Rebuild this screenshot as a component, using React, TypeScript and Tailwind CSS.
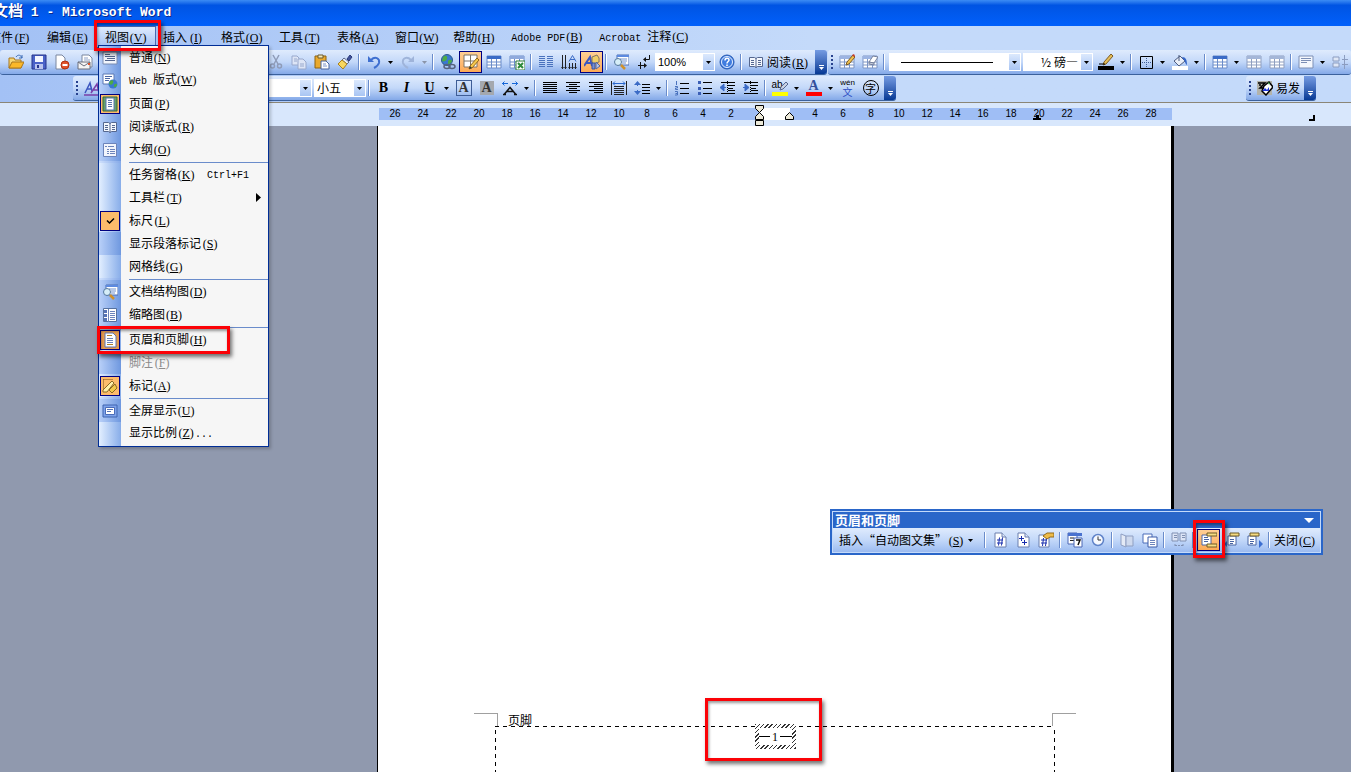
import { ReactNode } from "react";
import { clsx } from "clsx";

// ── Icons, all on a 16x16 grid ─────────────────────────────────────────────
const sheet = (
  <>
    <path d="M3 1h7l4 4v10H3z" fill="#fff" stroke="#6a7fae" />
    <path d="M10 1v4h4" fill="#dce6f8" stroke="#6a7fae" />
  </>
);

const grid = (stroke: string, head: string) => (
  <>
    <path d="M1 2h14v12H1z" fill="#fff" stroke={stroke} />
    <path d="M1 2h14v3H1z" fill={head} />
    <path d="M1 8h14M1 11h14M5.500 5v9M10.500 5v9" stroke={stroke} />
  </>
);

const lines = (rows: [number, number][]) => (
  <>
    {rows.map(([x, w], i) => (
      <path key={i} d={`M${x} ${2.5 + i * 2}h${w}`} stroke="#000" />
    ))}
  </>
);

const ICONS: Record<string, ReactNode> = {
  open: (
    <>
      <path d="M1 4h5l1 2h6v8H1z" fill="#f7d774" stroke="#a9761c" />
      <path d="M4 8h12l-3 6H1z" fill="#fbb829" stroke="#a9761c" />
      <path d="M8 3c2-3 5-2 6 1M14 1v3h-3" fill="none" stroke="#3b6bb5" />
    </>
  ),
  save: (
    <>
      <path d="M1 1h14v14H1z" fill="#4a62c8" stroke="#26358c" />
      <path d="M4 2h8v6H4z" fill="#f3f6ff" />
      <path d="M4 10h8v5H4z" fill="#b9c4ee" />
      <path d="M6 11h2v3H6z" fill="#26358c" />
    </>
  ),
  permission: (
    <>
      <path d="M2 1h6l3 3v11H2z" fill="#fff" stroke="#7b879f" />
      <circle cx="11" cy="11" r="4" fill="#e2532c" stroke="#b0310f" />
      <path d="M8.500 10h5v2h-5z" fill="#fff" />
    </>
  ),
  mail: (
    <>
      <path d="M5 1h7l3 3v9H5z" fill="#fff" stroke="#7b879f" />
      <path d="M7 4h4M7 6h6" stroke="#8fa2c8" />
      <path d="M1 8h12v7H1z" fill="#f5f5f5" stroke="#6b6f7c" />
      <path d="M1 8l6 4 6-4" fill="none" stroke="#6b6f7c" />
      <path d="M11 9h2v2h-2z" fill="#e2532c" />
    </>
  ),
  cut: (
    <g fill="none" stroke="#8f9cb8">
      <path d="M5 1l5 9M11 1L6 10" strokeWidth="1.500" />
      <circle cx="4.500" cy="12" r="2" strokeWidth="1.500" />
      <circle cx="11.500" cy="12" r="2" strokeWidth="1.500" />
    </g>
  ),
  copy: (
    <g fill="#dde5f6" stroke="#98a8cc">
      <path d="M1 2h5l2 2v7H1z" />
      <path d="M7 5h5l3 3v7H7z" />
      <path d="M3 5h3M3 7h3M9 10h4M9 12h4" />
    </g>
  ),
  paste: (
    <>
      <path d="M1 2h11v12H1z" fill="#e9a92d" stroke="#8d6211" />
      <path d="M4 1h5v3H4z" fill="#f6e8b5" stroke="#6b5a2e" />
      <path d="M7 7h5l3 3v5H7z" fill="#fff" stroke="#49659f" />
      <path d="M9 10h3M9 12h4" stroke="#7b93c9" />
    </>
  ),
  painter: (
    <>
      <path d="M10 5l3-4 2 2-3 4z" fill="#41539b" stroke="#2b3a7b" />
      <path d="M7 4l5 4-2 2-5-4z" fill="#e8edf7" stroke="#5d6b8e" />
      <path d="M5 6l5 4-4 5-5-5z" fill="#f8d75e" stroke="#a9801c" />
    </>
  ),
  undo: (
    <>
      <path d="M2 2v6h6z" fill="#3e6fd0" />
      <path d="M5 6c4-4 9-2 8 3-1 3-3 4-5 5" fill="none" stroke="#3e6fd0" strokeWidth="2" />
    </>
  ),
  redo: (
    <>
      <path d="M14 2v6H8z" fill="#9fb4da" />
      <path d="M11 6c-4-4-9-2-8 3 1 3 3 4 5 5" fill="none" stroke="#9fb4da" strokeWidth="2" />
    </>
  ),
  link: (
    <>
      <circle cx="7" cy="6" r="5.500" fill="#3a78cf" stroke="#2c5a8c" />
      <path d="M3 3c3-3 5 0 4 2S4 8 2 7zM8 7c2-2 4-1 4 0s-3 4-4 3z" fill="#4dab45" />
      <g fill="none" stroke="#56627c" strokeWidth="1.500">
        <ellipse cx="7" cy="12.500" rx="3" ry="2" />
        <ellipse cx="12" cy="12.500" rx="3" ry="2" />
      </g>
    </>
  ),
  tableBorder: (
    <>
      <path d="M1 1h13v12H1z" fill="#fff" stroke="#7f7466" />
      <path d="M1 7h13M7.500 1v12" stroke="#7f7466" />
      <path d="M6 15l1-3 7-8 2 2-7 8z" fill="#f6c94d" stroke="#93661a" />
      <path d="M6 15l1-3 2 2z" fill="#333" />
    </>
  ),
  table: grid("#6b8cc9", "#3b6bc6"),
  tableGrey: grid("#8f9fc0", "#a4b6d8"),
  excel: (
    <>
      {grid("#6b8cc9", "#8fa9dc")}
      <path d="M7 7h9v9H7z" fill="#fff" stroke="#2d7d37" />
      <path d="M9 9l5 5M14 9l-5 5" stroke="#2d8a3a" strokeWidth="2" />
    </>
  ),
  columns: (
    <path
      d="M1 2.500h6M1 4.500h6M1 6.500h6M1 8.500h6M1 10.500h6M1 12.500h6M9 2.500h6M9 4.500h6M9 6.500h6M9 8.500h6M9 10.500h6M9 12.500h6"
      stroke="#4a72bd"
    />
  ),
  textDir: (
    <>
      <path d="M1.500 1v14M4.500 1v14M8.500 9v6M11.500 9v6M14.500 9v6" stroke="#222" />
      <path d="M0 13h3l-1.500 2zM3 13h3l-1.500 2zM7 13h3l-1.500 2zM10 13h3l-1.500 2zM13 13h3l-1.500 2z" fill="#222" />
      <path d="M8 7.500l3.500-6 3.500 6M9 5.500h5" fill="none" stroke="#3b6bc6" />
    </>
  ),
  drawing: (
    <>
      <path d="M0 12L6 3l2 9M2 9h5" fill="none" stroke="#3d57c0" strokeWidth="2" />
      <path d="M8 3l5-2 2 3v4l-5 2-2-2z" fill="#f0cf67" stroke="#7f7466" />
      <path d="M8 9h3v6H8z" fill="#7590d4" stroke="#3b539e" />
      <path d="M12 8l4 4-4 3z" fill="#b7c5e9" stroke="#54699f" />
    </>
  ),
  docMap: (
    <>
      <path d="M4 1h12v10H4z" fill="#fff" stroke="#4b6fb5" />
      <path d="M4 1h12v2H4z" fill="#5d8ae0" />
      <path d="M7 5h7M9 7h5M9 9h4" stroke="#7393cf" />
      <circle cx="5" cy="8" r="3.500" fill="#d6eef8" stroke="#56799d" />
      <path d="M8 11l4 4" stroke="#d0912a" strokeWidth="2.500" />
    </>
  ),
  marks: (
    <>
      <path d="M13.500 1v4.500H8M4.500 8v7M2 11.500h6" fill="none" stroke="#111" />
      <path d="M10 3v5L7 5.500zM8 9v5l3-2.500z" fill="#111" />
    </>
  ),
  help: (
    <>
      <circle cx="8" cy="8" r="7" fill="#3f7ce0" stroke="#285bb4" />
      <circle cx="8" cy="8" r="5.500" fill="none" stroke="#e4eeff" />
      <path d="M6 6.500c0-3 4-3 4-.5 0 1.500-2 1.500-2 3.500M8 10.500v1.500" fill="none" stroke="#fff" strokeWidth="1.500" />
    </>
  ),
  book: (
    <>
      <path d="M1.500 3.500h5l1.500 1 1.500-1h5v9h-5l-1.500 1-1.500-1h-5z" fill="#f4f7fd" stroke="#55678f" />
      <path d="M8 4v10M3 6.500h3M3 8.500h3M3 10.500h3M10 6.500h3M10 8.500h3M10 10.500h3" stroke="#55678f" />
    </>
  ),
  drawTable: (
    <>
      {grid("#7d95c4", "#9db4e2")}
      <path d="M7 11l1-3 6-7 2 2-6 7z" fill="#f0c14d" stroke="#7a5a22" />
      <path d="M13 1l2 2 1-1-1-2z" fill="#c83a2c" />
    </>
  ),
  eraser: (
    <>
      {grid("#7d95c4", "#9db4e2")}
      <path d="M7 8l4-6 5 1-4 6z" fill="#fff" stroke="#75809c" />
      <path d="M7 8l5 1v2l-5-1z" fill="#c6cede" stroke="#75809c" />
    </>
  ),
  pen: (
    <>
      <path d="M0 12h16v4H0z" fill="#000" />
      <path d="M5 11l1-3 7-8 2 2-7 8z" fill="#e6bd57" stroke="#7a5a22" />
      <path d="M1 10h6" stroke="#000" />
    </>
  ),
  borders: (
    <>
      <path d="M2.500 2.500h12v12h-12z" fill="none" stroke="#000" />
      <path d="M8.500 4v10M4 8.500h10" stroke="#3e5d96" strokeDasharray="1 1" />
    </>
  ),
  fill: (
    <>
      <path d="M0 12h16v4H0z" fill="#fff" />
      <path d="M2 7l6-5 5 5-6 5z" fill="#e9eef8" stroke="#4d5c80" />
      <path d="M7 1v6" stroke="#4d5c80" />
      <path d="M10 3c4 0 5 3 5 8-2-1-2-5-4-6z" fill="#3566c8" />
    </>
  ),
  vAlign: (
    <>
      <path d="M1 2h14v12H1z" fill="#f4f7fd" stroke="#7d8fb5" />
      <path d="M3 4.500h10M3 6.500h10M3 8.500h6" stroke="#7d8fb5" />
    </>
  ),
  distribute: (
    <path d="M1 3h6v4H1zM1 9h6v4H1zM10 5.500h6M10 10.500h6M12.500 1v14" fill="#dfe7f6" stroke="#8c9dc0" />
  ),
  styles: (
    <>
      <path d="M1 13L6 3l2 8M3 9h4" fill="none" stroke="#3d57c0" strokeWidth="1.500" />
      <path d="M7 13l6-9 2 9M9 10h5M0 15h16" fill="none" stroke="#7a3fa8" strokeWidth="1.500" />
    </>
  ),
  scale: (
    <>
      <path d="M1 14.500h3M12 14.500h3M2.500 14L8 7.500l5.500 6.500M5 11.500h6" fill="none" stroke="#111" strokeWidth="1.500" />
      <path d="M0 3.500h6M2.500 1.500l-2 2 2 2M10 3.500h6M13.500 1.500l2 2-2 2" fill="none" stroke="#1667d8" />
    </>
  ),
  justify: lines([[1, 14], [1, 14], [1, 14], [1, 14], [1, 14], [1, 14]]),
  center: lines([[1, 14], [4, 8], [1, 14], [4, 8], [1, 14], [4, 8]]),
  right: lines([[1, 14], [6, 9], [1, 14], [6, 9], [1, 14], [6, 9]]),
  spread: (
    <>
      <path d="M.5 1v14M15.500 1v14M3 6.500h10M3 8.500h10M3 10.500h10M3 12.500h10M3 14.500h10" stroke="#222" />
      <path d="M2 3.500h12M4 1.500l-2 2 2 2M12 1.500l2 2-2 2" fill="none" stroke="#2a67cc" />
    </>
  ),
  spacing: (
    <>
      <path d="M3.500 2v4M3.500 10v4" stroke="#3b6bc6" />
      <path d="M0 5l3.500-4L7 5zM0 11l3.500 4L7 11z" fill="#3b6bc6" />
      <path d="M8 4.500h8M8 7.500h8M8 10.500h8M8 13.500h8" stroke="#000" />
    </>
  ),
  numbered: (
    <>
      <path d="M6 3.500h9M6 8.500h9M6 13.500h9" stroke="#000" />
      <path d="M2.500 1v4M1 6.500h2.500v1.500H1.500v1.500H4M1 11.500h2.500v3.500H1M1.500 13.500h2" fill="none" stroke="#4a72bd" />
    </>
  ),
  bullets: (
    <>
      <path d="M6 2.500h9M6 8.500h9M6 13.500h9" stroke="#000" />
      <path d="M1 1h3v3H1zM1 7h3v3H1zM1 12h3v3H1z" fill="#3b5fb6" />
    </>
  ),
  outdent: (
    <>
      <path d="M1 2.500h14M8 5.500h7M8 8.500h5M8 10.500h7M1 13.500h14" stroke="#000" />
      <path d="M7.500 1v14" stroke="#000" strokeDasharray="1 1" />
      <path d="M6 7.500H1M4 4L0 7.500 4 11z" fill="#3b6bc6" stroke="#3b6bc6" />
    </>
  ),
  indent: (
    <>
      <path d="M1 2.500h14M8 5.500h7M8 8.500h5M8 10.500h7M1 13.500h14" stroke="#000" />
      <path d="M7.500 1v14" stroke="#000" strokeDasharray="1 1" />
      <path d="M0 7.500h5M2 4l4 3.500L2 11z" fill="#3b6bc6" stroke="#3b6bc6" />
    </>
  ),
  autotext: (
    <>
      <path d="M0 1h15v14H0z" fill="#b3b3ab" />
      <path d="M7 6l5-4 4 5-7 8-4-4z" fill="#fff" stroke="#000" strokeWidth="1.500" />
      <path d="M1 3h7L3 8h4M2 5h2" fill="none" stroke="#000" strokeWidth="1.500" />
      <path d="M5 11l3-3 2 2 2-3v4z" fill="#1b33d8" />
      <path d="M11 2l2 1-1 2z" fill="#2e9b3a" />
    </>
  ),
  normal: (
    <>
      <path d="M1 2h14v12H1z" fill="#f2f5fc" stroke="#7b8cb2" />
      <path d="M3 4.500h5M3 6.500h10M5 8.500h8M3 10.500h10" stroke="#55678f" />
    </>
  ),
  web: (
    <>
      <path d="M1 1h11v10H1z" fill="#fff" stroke="#5a78b5" />
      <path d="M3 3.500h7M3 5.500h5M3 7.500h4" stroke="#4a66a5" />
      <circle cx="11" cy="11" r="4.500" fill="#3a78cf" />
      <path d="M8 8c3-2 4 0 3 2s-2 2-4 1zM12 12c2-2 3-1 3 0s-2 3-3 2z" fill="#4dab45" />
    </>
  ),
  page: (
    <>
      <path d="M1 1h14v14H1z" fill="#67a06a" stroke="#35683c" />
      <path d="M4 2h8v12H4z" fill="#fff" stroke="#5d76b0" />
      <path d="M6 4.500h4M6 6.500h4M6 8.500h4M6 10.500h4" stroke="#5d76b0" />
    </>
  ),
  outline: (
    <>
      <path d="M1.500 1.500h13v13h-13z" fill="#f2f5fc" stroke="#6c84bb" />
      <path d="M3 4.500h2M6 4.500h6M5 7.500h2M8 7.500h5M5 9.500h2M8 9.500h5M5 11.500h2M8 11.500h5" stroke="#6c84bb" />
    </>
  ),
  check: <path d="M5 7.500l2.500 2.500L12 5.500" fill="none" stroke="#000" strokeWidth="1.500" />,
  thumbs: (
    <>
      <path d="M1.500 1.500h13v13h-13z" fill="#fff" stroke="#55719f" />
      <path d="M6.500 2v13M8 4.500h5M8 6.500h5M8 8.500h5M8 10.500h5M8 12.500h5" stroke="#6c84bb" />
      <path d="M2 3h3v3H2zM2 7h3v3H2zM2 11h3v3H2z" fill="#5673b5" />
    </>
  ),
  header: (
    <>
      <path d="M3 1h8l3 3v11H3z" fill="#fff" stroke="#5d76b0" />
      <path d="M5 3h5v1H5zM5 12h6v1H5z" fill="#b28326" />
      <path d="M5 6.500h6M5 8.500h6M5 10.500h6" stroke="#6c84bb" />
    </>
  ),
  markup: (
    <>
      <path d="M1.500 1.500h9M1.500 1.500v12" stroke="#7a4f14" strokeDasharray="1 1" />
      <path d="M1 12l9-9 2 2-7 9H1z" fill="#fff0a8" stroke="#8b6b24" />
      <path d="M7 12l6-6 2 4-5 5z" fill="#f2c94b" stroke="#8b6b24" />
    </>
  ),
  fullscreen: (
    <>
      <path d="M1 2h14v12H1z" fill="#7ea3ea" stroke="#3f64b0" />
      <path d="M3.500 4.500h9v7h-9z" fill="#fff" stroke="#4a6cb8" />
      <path d="M5 6.500h6M5 8.500h4" stroke="#5673b5" />
    </>
  ),
  pageNum: (
    <>
      {sheet}
      <path d="M5 8h6M5 11h6M7.500 5.500l-1 8M10.500 5.500l-1 8" stroke="#1a2fae" />
    </>
  ),
  pageTotal: (
    <>
      {sheet}
      <path d="M4 6.500h5M6.500 4v5M7 10.500h5M9.500 8v5" stroke="#1a2fae" />
    </>
  ),
  pageFmt: (
    <>
      <path d="M1 3h10v12H1z" fill="#fff" stroke="#6a7fae" />
      <path d="M3 8h6M3 11h6M5.500 6l-1 8M8.500 6l-1 8" stroke="#1a2fae" />
      <path d="M5 4l4-3h7v4h-4l-3 2z" fill="#eebc4a" stroke="#946a18" />
    </>
  ),
  date: (
    <>
      <path d="M1 1h9v11H1z" fill="#fff" stroke="#4a66b5" />
      <path d="M1 1h14v3H1z" fill="#4a72cf" />
      <path d="M3 6h4M3 8.500h4" stroke="#222" />
      <path d="M7 6h8v9H7z" fill="#fff" stroke="#4a66b5" />
      <path d="M9 8h4l-2 5" fill="none" stroke="#111" strokeWidth="1.500" />
    </>
  ),
  time: (
    <>
      <circle cx="8" cy="8" r="5.500" fill="#f6f9ff" stroke="#5f83c9" strokeWidth="1.500" />
      <path d="M8 4.500V8h3" fill="none" stroke="#333" />
    </>
  ),
  setup: (
    <>
      <path d="M2 2l5 2v11l-5-2z" fill="#e4eaf6" stroke="#8f9fc2" />
      <path d="M7 4h7v10H7z" fill="#ced9ee" stroke="#8f9fc2" />
    </>
  ),
  showText: (
    <>
      <path d="M1 2h9v9H1z" fill="#fff" stroke="#4a6cb8" />
      <path d="M6 5h9v10H6z" fill="#fff" stroke="#3c5ca8" />
      <path d="M8 8.500h5M8 10.500h5M8 12.500h5" stroke="#6c84bb" />
    </>
  ),
  linkPrev: (
    <g fill="#dde5f6" stroke="#8090b2">
      <path d="M1 1h6v8H1zM9 1h6v8H9zM3 3.500h3M3 5.500h3M11 3.500h3M11 5.500h3" />
      <path d="M4 14v-3M4 13.500h8M12 14v-3" strokeDasharray="2 1" />
    </g>
  ),
  switchHf: (
    <>
      <path d="M1 3h9v10H1z" fill="#fff" stroke="#4a66a5" />
      <path d="M3 5.500h4M3 7.500h5M3 9.500h4" stroke="#4a66a5" />
      <path d="M6 1h10v3H6zM6 12h10v3H6z" fill="#f5dc83" stroke="#6f5a24" />
    </>
  ),
  prevHf: (
    <>
      <path d="M4 4h8v9H4z" fill="#fff" stroke="#4a66a5" />
      <path d="M6 7.500h4M6 9.500h4M6 11.500h3" stroke="#4a66a5" />
      <path d="M6 1h9v3H6z" fill="#f5dc83" stroke="#6f5a24" />
      <path d="M3 9l-3 3 3 3z" fill="#3c6fd2" />
    </>
  ),
  nextHf: (
    <>
      <path d="M1 4h8v9H1z" fill="#fff" stroke="#4a66a5" />
      <path d="M3 7.500h4M3 9.500h4M3 11.500h3" stroke="#4a66a5" />
      <path d="M3 1h9v3H3z" fill="#f5dc83" stroke="#6f5a24" />
      <path d="M12 8l4 4-4 4z" fill="#3c6fd2" />
    </>
  ),
};

const MENUS = [
  "文件(F)", "编辑(E)", "视图(V)", "插入(I)", "格式(O)", "工具(T)",
  "表格(A)", "窗口(W)", "帮助(H)", "Adobe PDF(B)", "Acrobat 注释(C)",
];

type ViewItem = {
  text: string;
  icon?: string;
  on?: boolean;
  dark?: boolean;
  keys?: string;
  sub?: boolean;
  off?: boolean;
  mark?: boolean;
};

const VIEW_MENU: ViewItem[][] = [
  [
    { text: "普通(N)", icon: "normal", dark: true },
    { text: "Web 版式(W)", icon: "web", dark: true },
    { text: "页面(P)", icon: "page", dark: true, on: true },
    { text: "阅读版式(R)", icon: "book", dark: true },
    { text: "大纲(O)", icon: "outline", dark: true },
  ],
  [
    { text: "任务窗格(K)", keys: "Ctrl+F1" },
    { text: "工具栏(T)", sub: true },
    { text: "标尺(L)", icon: "check", on: true },
    { text: "显示段落标记(S)", dark: true },
    { text: "网格线(G)" },
  ],
  [
    { text: "文档结构图(D)", icon: "docMap", dark: true },
    { text: "缩略图(B)", icon: "thumbs", dark: true },
  ],
  [
    { text: "页眉和页脚(H)", icon: "header", on: true, mark: true },
    { text: "脚注(F)", dark: true, off: true },
    { text: "标记(A)", icon: "markup", on: true },
  ],
  [
    { text: "全屏显示(U)", icon: "fullscreen", dark: true },
    { text: "显示比例(Z)..." },
  ],
];

const RULER = [
  "26", "24", "22", "20", "18", "16", "14", "12", "10", "8", "6", "4", "2", "", "",
  "4", "6", "8", "10", "12", "14", "16", "18", "20", "22", "24", "26", "28",
];

// Latin runs are half the width of a Chinese glyph, the access key is underlined
function Label({ text }: { text: string }) {
  return (
    <span className="whitespace-pre">
      {text.split(/(\([A-Z]\)|[ -'*-~]+)/).map((part, i) => {
        if (/^\([A-Z]\)$/.test(part)) {
          return (
            <span key={i} className="inline-block w-[18px] text-center font-['Liberation_Serif',serif]">
              (<u className="underline-offset-1">{part[1]}</u>)
            </span>
          );
        }
        if (/^[ -~]+$/.test(part)) {
          return <span key={i} className="text-[10px] font-['Liberation_Mono',monospace]">{part}</span>;
        }
        return part;
      })}
    </span>
  );
}

function Icon({ name }: { name: string }) {
  return <svg viewBox="0 0 16 16" className="size-4 shrink-0" aria-hidden="true">{ICONS[name]}</svg>;
}

function Tool({ name, on, children }: { name: string; on?: boolean; children?: ReactNode }) {
  return (
    <button
      aria-label={name}
      className={clsx(
        "flex h-[22px] w-[23px] shrink-0 items-center justify-center",
        on && "border border-[#000080] bg-linear-to-b from-[#ffcf94] to-[#fdaa55]",
      )}
    >
      {children ?? <Icon name={name} />}
    </button>
  );
}

function Arrow({ dim }: { dim?: boolean }) {
  return (
    <button aria-label="more" className="flex h-[22px] w-[11px] shrink-0 items-center justify-center">
      <svg viewBox="0 0 5 3" className="h-[3px] w-[5px]"><path d="M0 0h5L2.500 3z" fill={dim ? "#8a94a8" : "#000"} /></svg>
    </button>
  );
}

function Sep() {
  return <div className="mx-[2px] h-4 w-[2px] shrink-0 border-r border-l border-r-white border-l-[#6a8ccb]" />;
}

function Grip() {
  return (
    <div className="flex w-[7px] shrink-0 flex-col items-center gap-[2px]">
      {[0, 1, 2, 3].map((i) => (
        <div key={i} className="size-[2px] bg-[#27418e]" />
      ))}
    </div>
  );
}

function Cap() {
  return (
    <button
      aria-label="toolbar options"
      className="ml-auto flex w-3 shrink-0 flex-col items-center justify-end gap-px self-stretch rounded-r-[3px] bg-linear-to-b from-[#759be2] to-[#053995] pb-1"
    >
      <div className="h-px w-[5px] bg-white" />
      <svg viewBox="0 0 5 3" className="h-[3px] w-[5px]"><path d="M0 0h5L2.500 3z" fill="#fff" /></svg>
    </button>
  );
}

function Combo({ label, value, className, align }: { label: string; value: string; className: string; align?: string }) {
  return (
    <label className={clsx("flex h-[18px] shrink-0 items-center bg-white", className)}>
      <select aria-label={label} className={clsx("h-full min-w-0 flex-1 appearance-none bg-transparent px-[3px] outline-none", align)}>
        <option>{value}</option>
      </select>
      <span className="mr-px flex h-4 w-[11px] shrink-0 items-center justify-center bg-linear-to-b from-[#dce9fd] to-[#a9c5f3]">
        <svg viewBox="0 0 5 3" className="h-[3px] w-[5px]"><path d="M0 0h5L2.500 3z" /></svg>
      </span>
    </label>
  );
}

function Bar({ className, children }: { className?: string; children: ReactNode }) {
  return (
    <div
      className={clsx(
        "flex h-[25px] items-center rounded-[3px] border-b border-[#3b619c] bg-linear-to-b from-[#dfebfd] via-[#c3d8f9] to-[#84a9e8]",
        className,
      )}
    >
      {children}
    </div>
  );
}

// Red annotation frame
function Callout({ className }: { className: string }) {
  return (
    <span
      className={clsx(
        "pointer-events-none absolute z-30 border-[3px] border-[#fb0207] shadow-[2px_3px_4px_rgba(0,0,0,0.55),inset_1px_2px_3px_rgba(0,0,0,0.4)]",
        className,
      )}
    />
  );
}

function ViewMenu() {
  return (
    <div className="absolute top-[19px] left-px z-20 w-[171px] border border-[#002d96] bg-[#f6f6f6] shadow-[2px_2px_3px_rgba(0,0,0,0.2)]">
      {VIEW_MENU.map((group, g) => (
        <div key={g}>
          {g > 0 && (
            <div className="flex h-[2px] items-end">
              <div className="h-full w-[22px] bg-linear-to-r from-[#cfe0fc] to-[#86a9e8]" />
              <div className="ml-2 h-px flex-1 bg-[#6a8ccb]" />
            </div>
          )}
          {group.map((item) => (
            <button key={item.text} className="relative flex h-[23px] w-full items-center text-left">
              <span
                className={clsx(
                  "flex h-full w-[22px] shrink-0 items-center justify-center bg-linear-to-r",
                  item.dark ? "from-[#b9d0f8] to-[#6f98df]" : "from-[#e3efff] to-[#88ade9]",
                )}
              >
                {item.icon && (
                  <span
                    className={clsx(
                      "flex h-5 w-5 items-center justify-center",
                      item.on && "border border-[#000080]",
                      item.on && (item.mark ? "bg-[#e59a4e]" : "bg-[#fdbc6b]"),
                    )}
                  >
                    <Icon name={item.icon} />
                  </span>
                )}
              </span>
              <span className={clsx("ml-2", item.off && "text-[#8d8d8d]")}>
                <Label text={item.text} />
              </span>
              {item.keys && <span className="ml-3"><Label text={item.keys} /></span>}
              {item.sub && (
                <svg viewBox="0 0 5 9" className="mr-[7px] ml-auto h-[9px] w-[5px]"><path d="M0 0l5 4.500L0 9z" /></svg>
              )}
              {item.mark && <Callout className="-top-[2px] -left-[2px] h-7 w-[133px]" />}
            </button>
          ))}
        </div>
      ))}
      <div className="h-px w-[22px] bg-linear-to-r from-[#e3efff] to-[#88ade9]" />
    </div>
  );
}

function HeaderFooterBar() {
  return (
    <div className="absolute top-[383px] right-[28px] z-10 w-[493px] border-2 border-[#2a66c9]">
      <div className="border border-[#c4dafa]">
        <div className="flex h-4 items-center justify-between bg-[#2a66c9] pr-[6px] pl-[2px] text-[13px] font-bold text-white">
          页眉和页脚
          <svg viewBox="0 0 10 5" className="h-[5px] w-[10px]"><path d="M0 0h10L5 5z" fill="#fff" /></svg>
        </div>
        <div className="flex h-6 items-center bg-linear-to-b from-[#dfebfd] via-[#c3d8f9] to-[#9cbbf0]">
          <button className="pl-[6px]"><Label text="插入“自动图文集”(S)" /></button>
          <Arrow />
          <div className="w-[6px]" />
          <Sep />
          <Tool name="pageNum" />
          <Tool name="pageTotal" />
          <Tool name="pageFmt" />
          <Sep />
          <Tool name="date" />
          <Tool name="time" />
          <Sep />
          <Tool name="setup" />
          <Tool name="showText" />
          <Sep />
          <Tool name="linkPrev" />
          <Sep />
          <div className="relative ml-px">
            <Tool name="switchHf" on />
            <Callout className="-top-[9px] -left-1 h-[38px] w-8" />
          </div>
          <Tool name="prevHf" />
          <Tool name="nextHf" />
          <Sep />
          <button className="pl-[2px]"><Label text="关闭(C)" /></button>
        </div>
      </div>
    </div>
  );
}

function Ruler() {
  return (
    <div className="relative flex h-6 justify-center border-t border-[#8b8676] bg-[#d8e7fc] pl-[200px]">
      <div className="relative mt-[5px] flex h-3 w-[793px] bg-[#9fbef5] pl-[2px] font-['Liberation_Sans',sans-serif] text-[10px] leading-3">
        <div className="absolute top-0 left-[381px] h-3 w-[30px] bg-white" />
        {RULER.map((n, i) => (
          <span key={i} className="w-7 text-center">{n}</span>
        ))}
        <svg viewBox="0 0 9 21" className="absolute -top-[3px] left-[376px] h-[21px] w-[9px]">
          <path d="M.5.5h8v3l-4 4 4 4v3h-8v-3l4-4-4-4zM.5 15.500h8v5h-8z" fill="#ece9d8" stroke="#000" />
        </svg>
        <svg viewBox="0 0 9 9" className="absolute top-[3px] left-[406px] h-[9px] w-[9px]">
          <path d="M.5 8.500v-3l4-4 4 4v3z" fill="#ece9d8" stroke="#000" />
        </svg>
        <svg viewBox="0 0 8 5" className="absolute top-[7px] left-[654px] h-[5px] w-2">
          <path d="M0 3h8v2H0zM3 0h3v3H3z" />
        </svg>
      </div>
      <div className="absolute top-3 right-9 size-[6px] border-r-2 border-b-2 border-black" />
    </div>
  );
}

function Page() {
  return (
    <div className="flex w-[797px] flex-col justify-end border-r-[3px] border-l border-black bg-white">
      <div className="flex pr-[95px] pl-24">
        <div className="h-[13px] w-6 border-t border-r border-[#a0a0a0]" />
        <div className="flex-1 pl-[10px] leading-[13px]">页脚</div>
        <div className="h-[13px] w-6 border-t border-l border-[#a0a0a0]" />
      </div>
      <div className="mr-[116px] ml-[117px] flex h-[46px] flex-col">
        <div className="h-px bg-[repeating-linear-gradient(90deg,#000_0_4px,transparent_4px_8px)]" />
        <div className="flex flex-1 justify-between">
          <div className="w-px bg-[repeating-linear-gradient(180deg,transparent_0_3px,#000_3px_7px,transparent_7px_8px)]" />
          <div className="relative -mt-[3px] h-[25px]">
            <div className="bg-[repeating-linear-gradient(135deg,#333_0_1px,#fff_1px_3px)] p-1">
              <div className="flex h-[17px] w-[33px] items-center justify-center gap-[2px] bg-white font-['Liberation_Serif',serif]">
                <span className="h-px w-[12px] bg-black" />1<span className="h-px w-[12px] bg-black" />
              </div>
            </div>
            <Callout className="-top-[26px] -left-[50px] h-[63px] w-[117px]" />
          </div>
          <div className="w-px bg-[repeating-linear-gradient(180deg,transparent_0_3px,#000_3px_7px,transparent_7px_8px)]" />
        </div>
      </div>
    </div>
  );
}

export default function App() {
  return (
    <div
      lang="zh-CN"
      className="flex h-screen flex-col overflow-hidden bg-[#9099ae] font-['Noto_Sans_CJK_SC',sans-serif] text-[12px] leading-4 text-black"
    >
      {/* Title bar */}
      <header className="flex h-[26px] shrink-0 items-center overflow-hidden bg-linear-to-b from-[#3c8cf4] via-[#0054e3] via-20% to-[#0160fb] whitespace-pre text-white text-shadow-[1px_1px_0_#0a2a8c]">
        <h1 className="-ml-[7px] font-['Liberation_Mono','Noto_Sans_CJK_SC',monospace] text-[13px] font-bold">
          <span className="text-[15px]">文档</span> 1 - Microsoft Word
        </h1>
      </header>

      {/* Menus and toolbars */}
      <div className="shrink-0 bg-linear-to-r from-[#a3c1f5] to-[#c4dafa] to-60%">
        <nav className="-ml-[19px] flex h-6">
          {MENUS.map((m) => (
            <div key={m} className="relative flex items-start pt-px">
              <button
                className={clsx(
                  "h-5 shrink-0 px-2",
                  m === "视图(V)" && "bg-linear-to-b from-[#dfebfd] to-[#a4c1f3] outline outline-[#4a6ab0]",
                )}
              >
                <Label text={m} />
              </button>
              {m === "视图(V)" && (
                <>
                  <ViewMenu />
                  <Callout className="-top-[6px] -left-[3px] h-[31px] w-[67px]" />
                </>
              )}
            </div>
          ))}
        </nav>

        <div className="flex h-[26px]">
          <Bar className="w-[827px] pl-1">
            <Tool name="open" />
            <Tool name="save" />
            <Tool name="permission" />
            <Tool name="mail" />
            <div className="w-[168px]" />
            <Tool name="cut" />
            <Tool name="copy" />
            <Tool name="paste" />
            <Tool name="painter" />
            <Sep />
            <Tool name="undo" />
            <Arrow />
            <Tool name="redo" />
            <Arrow dim />
            <Sep />
            <Tool name="link" />
            <Tool name="tableBorder" on />
            <Tool name="table" />
            <Tool name="excel" />
            <Sep />
            <Tool name="columns" />
            <Tool name="textDir" />
            <Tool name="drawing" on />
            <Sep />
            <Tool name="docMap" />
            <Tool name="marks" />
            <Combo label="显示比例" value="100%" className="w-[60px] font-['Liberation_Sans',sans-serif] text-[11px]" />
            <Tool name="help" />
            <Sep />
            <button className="flex items-center gap-[3px] pl-1">
              <Icon name="book" />
              <Label text="阅读(R)" />
            </button>
            <Cap />
          </Bar>
          <Bar className="ml-px flex-1 overflow-hidden">
            <Grip />
            <Tool name="drawTable" />
            <Tool name="eraser" />
            <Sep />
            <div className="relative mx-[2px] flex items-center">
              <Combo label="线型" value="" className="w-[132px]" />
              <span className="pointer-events-none absolute left-3 h-px w-[92px] bg-black" />
            </div>
            <Combo label="粗细" value="½ 磅—" className="mr-px w-[70px]" align="text-right" />
            <Tool name="pen" />
            <Arrow />
            <Sep />
            <Tool name="borders" />
            <Arrow />
            <Tool name="fill" />
            <Arrow />
            <Sep />
            <Tool name="table" />
            <Arrow />
            <Tool name="tableGrey" />
            <Tool name="tableGrey" />
            <Sep />
            <Tool name="vAlign" />
            <Arrow />
            <Tool name="distribute" />
          </Bar>
        </div>

        <div className="flex h-[26px] justify-between pr-[35px] pl-[73px]">
          <Bar className="w-[823px]">
            <Grip />
            <Tool name="styles" />
            <Combo label="字体" value="宋体" className="w-[209px]" />
            <Combo label="字号" value="小五" className="ml-[2px] w-[52px]" />
            <Sep />
            <Tool name="bold"><b className="font-['Liberation_Serif',serif] text-[14px]">B</b></Tool>
            <Tool name="italic"><b className="font-['Liberation_Serif',serif] text-[14px] italic">I</b></Tool>
            <Tool name="underline"><b className="font-['Liberation_Serif',serif] text-[14px] underline">U</b></Tool>
            <Arrow />
            <Tool name="char border">
              <b className="size-4 border border-[#3e5d96] text-center font-['Liberation_Serif',serif] text-[14px] leading-[14px] text-[#333]">A</b>
            </Tool>
            <Tool name="char shading">
              <b className="size-[14px] bg-[#a4a8ae] text-center font-['Liberation_Serif',serif] text-[14px] leading-[14px] text-[#333]">A</b>
            </Tool>
            <Tool name="scale" />
            <Arrow />
            <Sep />
            <Tool name="justify" />
            <Tool name="center" />
            <Tool name="right" />
            <Tool name="spread" />
            <Tool name="spacing" />
            <Arrow />
            <Sep />
            <Tool name="numbered" />
            <Tool name="bullets" />
            <Tool name="outdent" />
            <Tool name="indent" />
            <Sep />
            <Tool name="highlight">
              <span className="relative h-4 w-4 border-b-4 border-[#ffff00] text-left font-['Liberation_Sans',sans-serif] text-[10px] leading-[10px]">
                ab
                <svg viewBox="0 0 10 10" className="absolute top-px -right-px size-[10px]">
                  <path d="M1 9l1-3 5-5 2 2-5 5z" fill="#c9d2e4" stroke="#55678f" />
                </svg>
              </span>
            </Tool>
            <Arrow />
            <Tool name="font color">
              <b className="h-4 w-4 border-b-4 border-[#ff0000] text-center font-['Liberation_Serif',serif] text-[14px] leading-[12px] text-[#34509c]">A</b>
            </Tool>
            <Arrow />
            <Tool name="phonetic">
              <span className="flex flex-col items-center font-['Liberation_Sans','Noto_Sans_CJK_SC',sans-serif] text-[8px] leading-[9px]">
                wén<span className="text-[10px] leading-[11px] text-[#2f4fc4]">文</span>
              </span>
            </Tool>
            <Tool name="enclose">
              <span className="flex size-4 items-center justify-center rounded-full border border-black text-[11px]">字</span>
            </Tool>
            <Cap />
          </Bar>
          <Bar className="w-[70px]">
            <Grip />
            <Tool name="autotext" />
            易发
            <Cap />
          </Bar>
        </div>
      </div>

      <Ruler />

      {/* Document area */}
      <main className="relative flex flex-1 justify-center pl-[200px]">
        <Page />
        <HeaderFooterBar />
      </main>
    </div>
  );
}
